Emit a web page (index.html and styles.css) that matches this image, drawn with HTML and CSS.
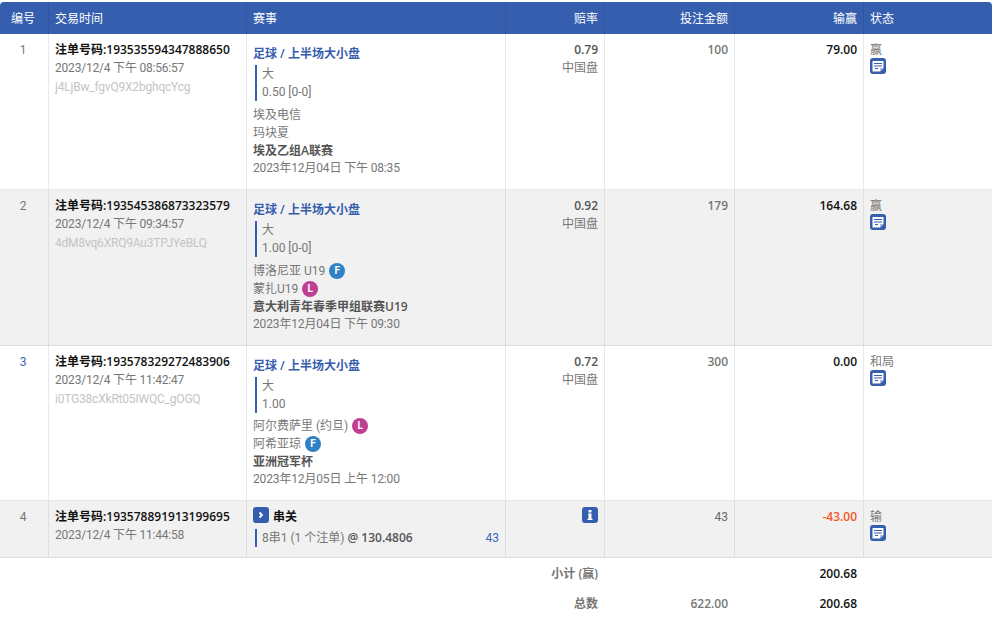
FILE: index.html
```html
<!DOCTYPE html>
<html lang="zh">
<head>
<meta charset="utf-8">
<title>注单</title>
<link rel="stylesheet" href="styles.css">
</head>
<body>
<svg class="defs" width="0" height="0" aria-hidden="true">
  <symbol id="note" viewBox="0 0 16 16">
    <rect width="16" height="16" rx="3" fill="#355eae"/>
    <path d="M2.5 3h11v7l-3.5 3.5H2.5z" fill="#fff"/>
    <path d="M4 5.5h8M4 8h8M5 10.5h3" stroke="#355eae" stroke-width="1" fill="none"/>
    <path d="M10 13.5V10h3.5z" fill="#a9bcdd"/>
  </symbol>
</svg>
<table class="bets">
  <colgroup>
    <col class="c-no"><col class="c-time"><col class="c-event"><col class="c-odds"><col class="c-stake"><col class="c-win"><col>
  </colgroup>
  <thead>
    <tr>
      <th class="center">编号</th><th>交易时间</th><th>赛事</th><th class="right">赔率</th><th class="right">投注金额</th><th class="right">输赢</th><th>状态</th>
    </tr>
  </thead>
  <tbody>
    <tr class="r1">
      <td class="center">1</td>
      <td><div class="ticket">注单号码:193535594347888650</div><div class="tight">2023/12/4 下午 08:56:57</div><div class="ref tight">j4LjBw_fgvQ9X2bghqcYcg</div></td>
      <td class="event">
        <div class="market">足球 / 上半场大小盘</div>
        <div class="sel"><div>大</div><div>0.50 [0-0]</div></div>
        <div>埃及电信</div><div>玛块夏</div><div class="league">埃及乙组A联赛</div><div class="tight-s">2023年12月04日 下午 08:35</div>
      </td>
      <td class="right"><div class="odds">0.79</div><div>中国盘</div></td>
      <td class="right stake">100</td>
      <td class="right win">79.00</td>
      <td><div>赢</div><svg class="ic"><use href="#note"/></svg></td>
    </tr>
    <tr class="r2 alt">
      <td class="center">2</td>
      <td><div class="ticket">注单号码:193545386873323579</div><div class="tight">2023/12/4 下午 09:34:57</div><div class="ref tight">4dM8vq6XRQ9Au3TPJYeBLQ</div></td>
      <td class="event">
        <div class="market">足球 / 上半场大小盘</div>
        <div class="sel"><div>大</div><div>1.00 [0-0]</div></div>
        <div>博洛尼亚 U19 <span class="tag f">F</span></div><div>蒙扎U19 <span class="tag l">L</span></div><div class="league">意大利青年春季甲组联赛U19</div><div class="tight-s">2023年12月04日 下午 09:30</div>
      </td>
      <td class="right"><div class="odds">0.92</div><div>中国盘</div></td>
      <td class="right stake">179</td>
      <td class="right win">164.68</td>
      <td><div>赢</div><svg class="ic"><use href="#note"/></svg></td>
    </tr>
    <tr class="r3">
      <td class="center link">3</td>
      <td><div class="ticket">注单号码:193578329272483906</div><div class="tight">2023/12/4 下午 11:42:47</div><div class="ref tight">i0TG38cXkRt05IWQC_gOGQ</div></td>
      <td class="event">
        <div class="market">足球 / 上半场大小盘</div>
        <div class="sel"><div>大</div><div>1.00</div></div>
        <div>阿尔费萨里 (约旦) <span class="tag l">L</span></div><div>阿希亚琼 <span class="tag f">F</span></div><div class="league">亚洲冠军杯</div><div class="tight-s">2023年12月05日 上午 12:00</div>
      </td>
      <td class="right"><div class="odds">0.72</div><div>中国盘</div></td>
      <td class="right stake">300</td>
      <td class="right win">0.00</td>
      <td><div>和局</div><svg class="ic"><use href="#note"/></svg></td>
    </tr>
    <tr class="r4 alt">
      <td class="center">4</td>
      <td><div class="ticket">注单号码:193578891913199695</div><div class="tight">2023/12/4 下午 11:44:58</div></td>
      <td class="parlay-cell">
        <div class="parlay-head">
          <svg class="ic" viewBox="0 0 16 16"><rect width="16" height="16" rx="3" fill="#355eae"/><path d="M6.5 5.5l2.5 2.5-2.5 2.5" fill="none" stroke="#fff" stroke-width="1.8"/></svg>
          <span class="ticket parlay-title">串关</span>
        </div>
        <div class="parlay-row"><span class="parlay-info">8串1 (1 个注单) <b>@ 130.4806</b></span><span class="link">43</span></div>
      </td>
      <td class="right"><svg class="ic" viewBox="0 0 16 16"><rect width="16" height="16" rx="3" fill="#355eae"/><path d="M6.5 3h3v2.4h-3zM6 6.6h3.5v5.2h1V13h-5v-1.2h1V7.8H6z" fill="#fff"/></svg></td>
      <td class="right stake plain">43</td>
      <td class="right win loss">-43.00</td>
      <td><div>输</div><svg class="ic"><use href="#note"/></svg></td>
    </tr>
  </tbody>
  <tfoot>
    <tr class="f1">
      <td colspan="3"></td><td class="right strong">小计 (赢)</td><td></td><td class="right win">200.68</td><td></td>
    </tr>
    <tr class="f2">
      <td colspan="3"></td><td class="right strong">总数</td><td class="right stake">622.00</td><td class="right win">200.68</td><td></td>
    </tr>
  </tfoot>
</table>
</body>
</html>
```
FILE: styles.css
```css
html, body { background: #fff; }
body {
  margin: 2px 3px 0 0;
  font: 12px/18px Roboto, "Noto Sans CJK SC", sans-serif;
  color: #777;
}
.defs { position: absolute; }
.bets {
  width: 992px;
  table-layout: fixed;
  border-collapse: separate;
  border-spacing: 0;
}
.c-no { width: 49px; }
.c-time { width: 198px; }
.c-event { width: 259px; }
.c-odds { width: 99px; }
.c-stake { width: 130px; }
.c-win { width: 129px; }
th {
  height: 32px;
  padding: 1px 6px 0;
  box-sizing: border-box;
  background: #355eae;
  color: #fff;
  font-weight: 400;
  text-align: left;
  border-right: 1px solid #2f559f;
}
th:last-child { border-right: 0; border-top-right-radius: 4px; }
th:first-child { border-top-left-radius: 4px; }
th.center { text-align: center; padding-right: 8px; }
th.right { text-align: right; }
tbody td {
  vertical-align: top;
  padding: 7px 6px;
  box-sizing: border-box;
  border-right: 1px solid #e8e8e8;
  border-bottom: 1px solid #e8e8e8;
}
tbody td:last-child { border-right: 0; }
tbody td.center { padding-right: 8px; }
.alt td { background: #f1f1f1; border-color: #dedede; }
.r1 td, .r2 td { height: 156px; }
.r3 td { height: 155px; }
.r4 td { height: 57px; }
.center { text-align: center; }
.right { text-align: right; }
.ticket, .market, .league, .odds, .win, .strong, .parlay-info b, .stake {
  font-family: "Open Sans", "Noto Sans CJK SC", sans-serif;
  font-weight: 600;
}
.ticket { color: #111; }
.tight { letter-spacing: -0.2px; }
.tight-s { letter-spacing: -0.15px; }
.ref { color: #c4c4c4; padding-top: 1px; }
tbody td.event { padding-top: 11px; line-height: 17.7px; }
.market { color: #355eae; margin-bottom: 2px; line-height: 18px; }
.sel {
  border-left: 2px solid #355eae;
  margin: 0 0 6px 2px;
  padding: 1px 0 0 5px;
  line-height: 17.5px;
}
.r3 .sel { margin-bottom: 5px; }
.league { color: #555; }
.odds { color: #555; }
.stake { color: #777; }
.stake.plain { font-family: Roboto, sans-serif; font-weight: 400; color: #666; }
.win { color: #111; }
.win.loss { color: #f4581c; }
.link { color: #3c66bb; }
.ic { display: block; width: 16px; height: 16px; margin-top: -1px; }
td.right > .ic { margin-left: auto; }
.tag {
  display: inline-flex;
  align-items: center;
  justify-content: center;
  width: 16px;
  height: 16px;
  margin-left: 1px;
  border-radius: 50%;
  color: #fff;
  font-size: 10px;
  font-weight: 700;
  line-height: 1;
  vertical-align: 1px;
}
.tag.f { background: #2f82c6; }
.tag.l { background: #c13f93; }
.parlay-head { display: flex; align-items: center; gap: 4px; height: 16px; }
.parlay-head .ic { margin-top: 0; }
.parlay-title { padding-top: 3px; }
.parlay-cell { padding-top: 6px !important; }
.parlay-row {
  display: flex;
  justify-content: space-between;
  align-items: center;
  border-left: 2px solid #355eae;
  margin: 6px 0 0 2px;
  padding-left: 5px;
}
.parlay-info b { color: #555; }
tfoot td { padding: 0 7px 0 6px; box-sizing: border-box; }
.f1 td { height: 31px; }
.f2 td { height: 29px; }
.strong { color: #777; }
```
